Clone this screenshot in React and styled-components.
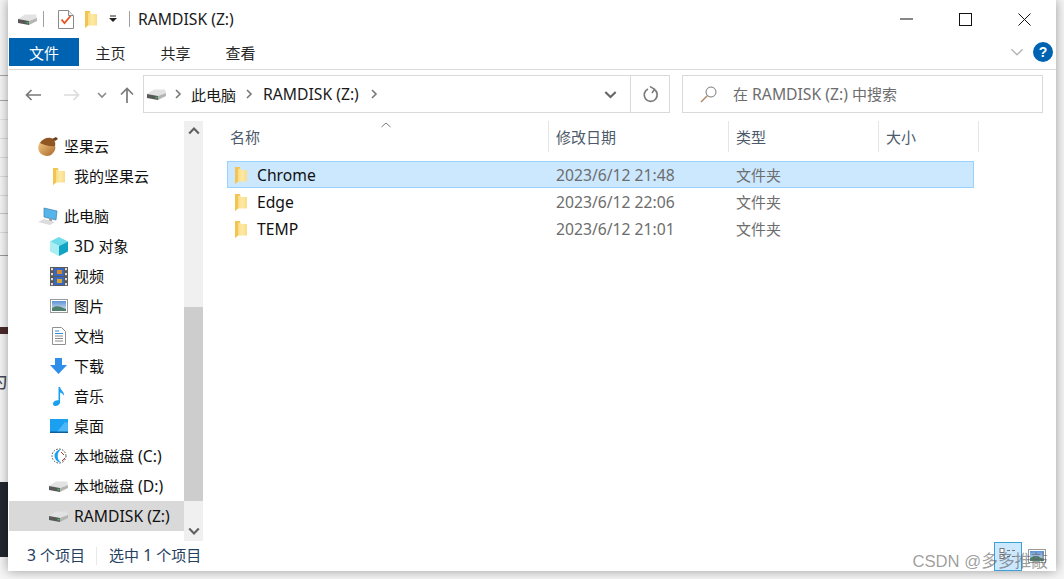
import React from 'react';
import styled, { createGlobalStyle } from 'styled-components';

const GlobalStyle = createGlobalStyle`
    html, body { margin: 0; padding: 0; background: #f4f4f4; }
    body { font-family: "Noto Sans", "Noto Sans CJK SC", sans-serif; overflow: hidden; }
`;

const Page = styled.div`
    width: 1064px;
    height: 579px;
    display: flex;
    align-items: flex-start;
    position: relative;
    overflow: hidden;
    background: #f6f6f6;
`;

// bit of the browser page that shows behind the window
const Strip = styled.div`
    width: 8px;
    height: 579px;
    flex-shrink: 0;
    display: flex;
    flex-direction: column;
    overflow: hidden;
`;

const StripMark = styled.div`
    flex-shrink: 0;
    height: ${p => p.$h}px;
    margin-top: ${p => p.$gap}px;
    background: ${p => p.$color};
`;

const StripGlyph = styled.div`
    flex-shrink: 0;
    height: 22px;
    margin-top: 36px;
    margin-left: -11px;
    width: 20px;
    font-size: 19px;
    line-height: 22px;
    color: #444b58;
`;

const Window = styled.div`
    width: 1048px;
    height: 571px;
    flex-shrink: 0;
    display: flex;
    flex-direction: column;
    background: #fff;
    box-shadow: 0 0 11px rgba(0, 0, 0, 0.38);
    position: relative;
    z-index: 1;
    padding-left: 1px;
    box-sizing: border-box;
    font-size: 15px;
`;

// Segoe UI runs wider than Noto Sans, so latin runs get a slightly larger size
const LatinRun = styled.span`
    font-size: 15.7px;
`;

const TitleBar = styled.div`
    height: 38px;
    display: flex;
    align-items: center;
    flex-shrink: 0;
`;

const QuickSlot = styled.div`
    display: flex;
    align-items: center;
    margin-left: ${p => p.$left}px;
`;

const TitleDivider = styled.div`
    width: 1px;
    height: 16px;
    background: #a0a0a0;
    margin-left: ${p => p.$left}px;
`;

const TitleText = styled.div`
    margin-left: 8px;
    color: #1a1a1a;
    flex: 1;
`;

const WinButton = styled.div`
    width: 59px;
    height: 38px;
    display: flex;
    align-items: center;
    justify-content: center;
`;

const WinButtons = styled.div`
    display: flex;
    margin-right: 2px;
`;

const RibbonTabs = styled.div`
    height: 31px;
    display: flex;
    align-items: flex-start;
    border-bottom: 1px solid #d9d9d9;
    flex-shrink: 0;
`;

const Tab = styled.div`
    height: 28px;
    width: ${p => (p.$file ? 70 : 65)}px;
    box-sizing: border-box;
    padding-right: ${p => (p.$file ? 0 : 2)}px;
    display: flex;
    align-items: center;
    justify-content: center;
    color: ${p => (p.$file ? '#fff' : '#262626')};
    background: ${p => (p.$file ? '#0063b1' : 'transparent')};
`;

const RibbonRight = styled.div`
    margin-left: auto;
    margin-right: 3px;
    height: 28px;
    display: flex;
    align-items: center;
    gap: 9px;
`;

const HelpBadge = styled.div`
    width: 20px;
    height: 20px;
    border-radius: 50%;
    background: #0063b1;
    color: #fff;
    font-size: 14px;
    font-weight: 700;
    font-family: "Liberation Sans", sans-serif;
    display: flex;
    align-items: center;
    justify-content: center;
`;

const AddressRow = styled.div`
    height: 49px;
    display: flex;
    align-items: flex-start;
    padding-top: 5px;
    box-sizing: border-box;
    flex-shrink: 0;
`;

const NavButtons = styled.div`
    width: 134px;
    height: 38px;
    flex-shrink: 0;
    display: flex;
    align-items: center;
    padding-top: 2px;
    box-sizing: border-box;
`;

const NavSlot = styled.div`
    display: flex;
    margin-left: ${p => p.$left}px;
`;

const AddressBox = styled.div`
    width: 527px;
    height: 38px;
    box-sizing: border-box;
    border: 1px solid #d9d9d9;
    display: flex;
    align-items: center;
    color: #1a1a1a;
`;

const Crumb = styled.span`
    margin-left: ${p => p.$left}px;
    display: flex;
    align-items: baseline;
`;

const AddressEnd = styled.div`
    margin-left: auto;
    display: flex;
    align-items: center;
    height: 100%;
`;

const AddressAction = styled.div`
    height: 100%;
    width: ${p => p.$w}px;
    display: flex;
    align-items: center;
    justify-content: center;
    box-sizing: border-box;
    border-left: ${p => (p.$line ? '1px solid #d9d9d9' : 'none')};
`;

const SearchBox = styled.div`
    margin-left: 12px;
    width: 361px;
    height: 38px;
    box-sizing: border-box;
    border: 1px solid #d9d9d9;
    display: flex;
    align-items: center;
    padding-left: 17px;
    gap: 16px;
    color: #6d6d6d;
`;

const Body = styled.div`
    flex: 1;
    min-height: 0;
    display: flex;
    padding-top: 2px;
`;

const Sidebar = styled.div`
    width: 175px;
    flex-shrink: 0;
    box-sizing: border-box;
    padding-top: 10px;
    display: flex;
    flex-direction: column;
`;

const NavRow = styled.div`
    height: 30px;
    flex-shrink: 0;
    box-sizing: border-box;
    display: flex;
    align-items: center;
    padding-left: ${p => (p.$top ? 29 : 40)}px;
    margin-bottom: ${p => (p.$groupEnd ? 10 : 0)}px;
    color: #111;
    background: ${p => (p.$active ? '#d9d9d9' : 'transparent')};
    white-space: nowrap;
`;

const NavIcon = styled.span`
    width: ${p => (p.$top ? 21 : 19)}px;
    margin-right: ${p => (p.$top ? 5 : 6)}px;
    flex-shrink: 0;
    display: flex;
    justify-content: center;
`;

const ScrollBar = styled.div`
    width: 19px;
    flex-shrink: 0;
    background: #f0f0f0;
    display: flex;
    flex-direction: column;
`;

const ScrollArrow = styled.div`
    height: 20px;
    flex-shrink: 0;
    margin-top: ${p => (p.$end ? 'auto' : 0)};
    display: flex;
    align-items: center;
    justify-content: center;
`;

const ScrollThumb = styled.div`
    height: 194px;
    margin-top: 166px;
    background: #cdcdcd;
`;

const FileArea = styled.div`
    flex: 1;
    min-width: 0;
    padding-left: 19px;
    display: flex;
    flex-direction: column;
`;

const HeaderRow = styled.div`
    height: 31px;
    display: flex;
    margin-bottom: 9px;
    position: relative;
    color: #4c5a6b;
`;

const HeaderCell = styled.div`
    width: ${p => p.$w}px;
    flex-shrink: 0;
    box-sizing: border-box;
    padding-left: ${p => p.$pad}px;
    border-right: 1px solid #e5e5e5;
    display: flex;
    align-items: center;
`;

const SortCaret = styled.svg`
    position: absolute;
    left: 159px;
    top: 1px;
`;

const FileRow = styled.div`
    width: 747px;
    height: 27px;
    margin-left: 5px;
    box-sizing: border-box;
    display: flex;
    align-items: center;
    color: #6d6d6d;
    border: 1px solid ${p => (p.$selected ? '#99d1ff' : 'transparent')};
    background: ${p => (p.$selected ? '#cce8ff' : 'transparent')};
`;

const FileName = styled.div`
    width: 328px;
    flex-shrink: 0;
    display: flex;
    align-items: center;
    gap: 10px;
    padding-left: 7px;
    box-sizing: border-box;
    color: #111;
`;

const FileDate = styled.div`
    width: 180px;
    flex-shrink: 0;
`;

const StatusBar = styled.div`
    height: 30px;
    flex-shrink: 0;
    display: flex;
    align-items: center;
    color: #24405f;
`;

const StatusText = styled.span`
    margin-left: ${p => p.$left}px;
    margin-bottom: 2px;
`;

const StatusDivider = styled.div`
    width: 1px;
    height: 18px;
    background: #e8e8e8;
    margin-left: 11px;
`;

const ViewButtons = styled.div`
    margin-left: auto;
    margin-right: 9px;
    display: flex;
    align-items: center;
    gap: 5px;
`;

const ViewButton = styled.div`
    width: ${p => (p.$on ? 28 : 20)}px;
    height: 29px;
    box-sizing: border-box;
    display: flex;
    align-items: center;
    justify-content: center;
    border: 1px solid ${p => (p.$on ? '#3f9fd8' : 'transparent')};
    background: ${p => (p.$on ? '#cce8ff' : 'transparent')};
`;

const Watermark = styled.div`
    position: absolute;
    right: 16px;
    bottom: 7px;
    z-index: 2;
    font-family: "Liberation Sans", "Noto Sans CJK SC", sans-serif;
    font-size: 16.7px;
    color: rgba(95, 95, 95, 0.62);
`;

// renders a label, giving the latin parts their own size
const Mixed = ({ text }) => (
    <span>
        {text.split(/([\u4e00-\u9fff]+)/).map((part, i) =>
            /[\u4e00-\u9fff]/.test(part) ? part : <LatinRun key={i}>{part}</LatinRun>
        )}
    </span>
);

const Chevron = ({ size = 10, color = '#666', dir = 'right', width = 1.6 }) => {
    const d = { right: 'M3 1l4 4-4 4', down: 'M1 3l4 4 4-4', up: 'M1 7l4-4 4 4' }[dir];
    return (
        <svg width={size} height={size} viewBox="0 0 10 10" fill="none">
            <path d={d} stroke={color} strokeWidth={width} />
        </svg>
    );
};

const FolderIcon = () => (
    <svg width="12" height="18" viewBox="0 0 12 18">
        <defs>
            <linearGradient id="fold" x1="0" y1="0" x2="1" y2="0">
                <stop offset="0" stopColor="#f7d26c" />
                <stop offset="0.6" stopColor="#fde9a6" />
                <stop offset="1" stopColor="#f9dc88" />
            </linearGradient>
        </defs>
        <path d="M0 1h5l1 3h6v11.500H3L0 18z" fill="url(#fold)" />
        <path d="M0 1h5v1.500l-2 .5v12.500L0 18z" fill="#f2c552" />
    </svg>
);

const DriveIcon = () => (
    <svg width="19" height="11" viewBox="0 0 19 11">
        <path d="M0 5l7-4.500h11l1 3.500-8 3z" fill="#e2e2e2" />
        <path d="M11 7l8-3v3l-8 4z" fill="#b4b4b4" />
        <path d="M0 5l11 2v4L0 9z" fill="#585858" />
        <rect x="8.500" y="7.800" width="2" height="1.500" fill="#3fbf5f" />
    </svg>
);

const TaskIcon = () => (
    <svg width="16" height="19" viewBox="0 0 16 19">
        <path d="M.5.5h10l5 5v13H.5z" fill="#fff" stroke="#8a8a8a" />
        <path d="M10.500.5v5h5" fill="#eee" stroke="#8a8a8a" />
        <path d="M3.500 9.500l3 3.500 6-7" fill="none" stroke="#e8531f" strokeWidth="1.800" />
    </svg>
);

const AcornIcon = () => (
    <svg width="21" height="21" viewBox="0 0 21 21">
        <defs>
            <linearGradient id="nut" x1="0" y1="0" x2="1" y2="1">
                <stop offset="0" stopColor="#f1c982" />
                <stop offset="1" stopColor="#a9662a" />
            </linearGradient>
        </defs>
        <path d="M2 6c-3 5-2 11 3 13 4 2 8 1 10-2 2-2 3-5 2-7z" fill="url(#nut)" />
        <path d="M2 7c2-4 7-6 11-5 3 1 5 4 4 8-4 1-11-1-15-3z" fill="#8f5522" />
        <path d="M14 3l4-2 2 2-3 2z" fill="#6d3c17" />
    </svg>
);

const PcIcon = () => (
    <svg width="21" height="18" viewBox="0 0 21 18">
        <path d="M6 1l13 3-1 9-12-3z" fill="#54b5ea" stroke="#3c7fb0" strokeWidth=".7" />
        <path d="M11 11l3 1v3l-3-1z" fill="#9c9c9c" />
        <path d="M0 15l6-3 11 3-5 3z" fill="#dcdcdc" />
    </svg>
);

const CubeIcon = () => (
    <svg width="18" height="19" viewBox="0 0 18 19">
        <path d="M9 0l9 4.500L9 9 0 4.500z" fill="#6fdcea" />
        <path d="M0 4.500L9 9v10l-9-4.500z" fill="#a8eef2" />
        <path d="M18 4.500L9 9v10l9-4.500z" fill="#12a4c4" />
    </svg>
);

const FilmIcon = () => (
    <svg width="18" height="19" viewBox="0 0 18 19">
        <rect width="18" height="19" fill="#5a5a5a" />
        {[1, 6, 11, 16].map(y => (
            <React.Fragment key={y}>
                <rect x="1" y={y} width="2" height="2.200" fill="#ddd" />
                <rect x="15" y={y} width="2" height="2.200" fill="#ddd" />
            </React.Fragment>
        ))}
        <rect x="4" y="1" width="10" height="8" fill="#3a68c0" />
        <rect x="4" y="10" width="10" height="8" fill="#3a68c0" />
        <rect x="7" y="3" width="5" height="4" fill="#d58a2a" />
        <rect x="7" y="12" width="5" height="4" fill="#d5a72a" />
    </svg>
);

const PictureIcon = () => (
    <svg width="18" height="14" viewBox="0 0 18 14">
        <defs>
            <linearGradient id="sky" x1="0" y1="0" x2="0" y2="1">
                <stop offset="0" stopColor="#5d93d6" />
                <stop offset="1" stopColor="#dfe9ee" />
            </linearGradient>
        </defs>
        <rect x=".5" y=".5" width="17" height="13" fill="#fff" stroke="#9a9a9a" />
        <rect x="2" y="2" width="14" height="10" fill="url(#sky)" />
        <path d="M2 9c4-3 8-2 14 1v2H2z" fill="#4f7f6f" />
    </svg>
);

const DocIcon = () => (
    <svg width="14" height="18" viewBox="0 0 14 18">
        <path d="M.5.5h9l4 4v13H.5z" fill="#fff" stroke="#909090" />
        <path d="M3 4h4M3 6.500h8" stroke="#2f8fe0" />
        <path d="M3 9h8M3 11.500h8M3 14h8" stroke="#8a8a8a" />
    </svg>
);

const DownloadIcon = () => (
    <svg width="17" height="16" viewBox="0 0 17 16">
        <path d="M5 0h7v7h5l-8.500 9L0 7h5z" fill="#2f8fe8" />
    </svg>
);

const MusicIcon = () => (
    <svg width="12" height="19" viewBox="0 0 12 19">
        <path d="M5.500 0h1.600c0 3 4.500 4.500 4 9-.6-2-2.600-3-4-3.500V15c0 2.500-2.500 4-5 4C.5 19 0 17.500 0 16.500 0 14.500 2.500 13 5.500 13.300z" fill="#1b9ff0" />
    </svg>
);

const DesktopIcon = () => (
    <svg width="18" height="14" viewBox="0 0 18 14">
        <rect width="18" height="13" fill="#1b9ff0" />
        <path d="M7 13l8-10 3 1v9z" fill="#4db8f7" />
        <rect y="12.500" width="18" height="1.500" fill="#0d5f9c" />
    </svg>
);

const SystemDiskIcon = () => (
    <svg width="16" height="16" viewBox="0 0 16 16">
        <circle cx="8" cy="8" r="7" fill="#fff" stroke="#444" strokeDasharray="1.500 1.500" />
        <path d="M10 1.500A6.500 6.500 0 1 0 10 14.500 A8 8 0 0 1 10 1.500z" fill="#1b9ff0" />
        <path d="M10 4l3 3M11 13l3-3" stroke="#c03040" />
    </svg>
);

const sidebarRows = [
    { label: '坚果云', Icon: AcornIcon, top: true },
    { label: '我的坚果云', Icon: FolderIcon, groupEnd: true },
    { label: '此电脑', Icon: PcIcon, top: true },
    { label: '3D 对象', Icon: CubeIcon },
    { label: '视频', Icon: FilmIcon },
    { label: '图片', Icon: PictureIcon },
    { label: '文档', Icon: DocIcon },
    { label: '下载', Icon: DownloadIcon },
    { label: '音乐', Icon: MusicIcon },
    { label: '桌面', Icon: DesktopIcon },
    { label: '本地磁盘 (C:)', Icon: SystemDiskIcon },
    { label: '本地磁盘 (D:)', Icon: DriveIcon },
    { label: 'RAMDISK (Z:)', Icon: DriveIcon, active: true },
];

const files = [
    { name: 'Chrome', date: '2023/6/12 21:48', selected: true },
    { name: 'Edge', date: '2023/6/12 22:06' },
    { name: 'TEMP', date: '2023/6/12 21:01' },
];

const stripMarks = [
    [1, 75, '#a8a8a8'], [1, 24, '#a8a8a8'], [1, 18, '#e2e2e2'], [1, 18, '#dcdcdc'], [1, 18, '#dcdcdc'],
    [1, 18, '#dcdcdc'], [1, 18, '#dcdcdc'], [1, 17, '#c8c8c8'], [1, 18, '#dcdcdc'], [1, 22, '#9a9a9a'],
    [7, 71, '#4b2a2c'],
];

export default function App() {
    return (
        <Page>
            <GlobalStyle />
            <Strip>
                {stripMarks.map(([h, gap, color], i) => (
                    <StripMark key={i} $h={h} $gap={gap} $color={color} />
                ))}
                <StripGlyph>为</StripGlyph>
                <StripMark $h={75} $gap={90} $color="#23272f" />
            </Strip>
            <Window>
                <TitleBar>
                    <QuickSlot $left={9}><DriveIcon /></QuickSlot>
                    <TitleDivider $left={6} />
                    <QuickSlot $left={14}><TaskIcon /></QuickSlot>
                    <QuickSlot $left={11}><FolderIcon /></QuickSlot>
                    <QuickSlot $left={12}>
                        <svg width="8" height="8" viewBox="0 0 8 8">
                            <path d="M1 1h6" stroke="#222" />
                            <path d="M0 3h8L4 7z" fill="#222" />
                        </svg>
                    </QuickSlot>
                    <TitleDivider $left={12} />
                    <TitleText><Mixed text="RAMDISK (Z:)" /></TitleText>
                    <WinButtons>
                        <WinButton>
                            <svg width="13" height="2" viewBox="0 0 13 2"><path d="M0 1h13" stroke="#111" /></svg>
                        </WinButton>
                        <WinButton>
                            <svg width="13" height="13" viewBox="0 0 13 13"><rect x=".5" y=".5" width="12" height="12" fill="none" stroke="#111" /></svg>
                        </WinButton>
                        <WinButton>
                            <svg width="13" height="13" viewBox="0 0 13 13"><path d="M.5.5l12 12M12.500.5l-12 12" stroke="#111" /></svg>
                        </WinButton>
                    </WinButtons>
                </TitleBar>
                <RibbonTabs>
                    <Tab $file>文件</Tab>
                    <Tab>主页</Tab>
                    <Tab>共享</Tab>
                    <Tab>查看</Tab>
                    <RibbonRight>
                        <Chevron size={14} color="#b5b5b5" dir="down" width={1} />
                        <HelpBadge>?</HelpBadge>
                    </RibbonRight>
                </RibbonTabs>
                <AddressRow>
                    <NavButtons>
                        <NavSlot $left={16}>
                            <svg width="16" height="12" viewBox="0 0 16 12"><path d="M16 6H1.500M6.500 1l-5 5 5 5" fill="none" stroke="#7a7a7a" strokeWidth="1.700" /></svg>
                        </NavSlot>
                        <NavSlot $left={23}>
                            <svg width="16" height="12" viewBox="0 0 16 12"><path d="M0 6h14.500M9.500 1l5 5-5 5" fill="none" stroke="#dcdcdc" strokeWidth="1.700" /></svg>
                        </NavSlot>
                        <NavSlot $left={17}><Chevron size={10} color="#8a8a8a" dir="down" /></NavSlot>
                        <NavSlot $left={13}>
                            <svg width="14" height="16" viewBox="0 0 14 16"><path d="M7 16V1.500M1 7.500l6-6 6 6" fill="none" stroke="#7a7a7a" strokeWidth="1.700" /></svg>
                        </NavSlot>
                    </NavButtons>
                    <AddressBox>
                        <Crumb $left={3}><DriveIcon /></Crumb>
                        <Crumb $left={7}><Chevron size={10} color="#777" /></Crumb>
                        <Crumb $left={8}>此电脑</Crumb>
                        <Crumb $left={8}><Chevron size={10} color="#777" /></Crumb>
                        <Crumb $left={9}><Mixed text="RAMDISK (Z:)" /></Crumb>
                        <Crumb $left={10}><Chevron size={10} color="#777" /></Crumb>
                        <AddressEnd>
                            <AddressAction $w={40}><Chevron size={13} color="#666" dir="down" /></AddressAction>
                            <AddressAction $w={39} $line>
                                <svg width="17" height="17" viewBox="0 0 17 17">
                                    <path d="M6 3a6.500 6.500 0 1 0 6 .3" fill="none" stroke="#7a7a7a" strokeWidth="1.700" />
                                    <path d="M8 0.500L12.500 3.200 10 7" fill="none" stroke="#7a7a7a" strokeWidth="1.500" />
                                </svg>
                            </AddressAction>
                        </AddressEnd>
                    </AddressBox>
                    <SearchBox>
                        <svg width="17" height="17" viewBox="0 0 17 17">
                            <circle cx="11" cy="6" r="5" fill="none" stroke="#7a7a7a" />
                            <path d="M7.500 9.500L1 16" stroke="#b08a60" strokeWidth="1.400" />
                        </svg>
                        <Mixed text="在 RAMDISK (Z:) 中搜索" />
                    </SearchBox>
                </AddressRow>
                <Body>
                    <Sidebar>
                        {sidebarRows.map(({ label, Icon, top, groupEnd, active }) => (
                            <NavRow key={label} $top={top} $groupEnd={groupEnd} $active={active}>
                                <NavIcon $top={top}><Icon /></NavIcon>
                                <Mixed text={label} />
                            </NavRow>
                        ))}
                    </Sidebar>
                    <ScrollBar>
                        <ScrollArrow><Chevron size={12} color="#606060" dir="up" width={1.8} /></ScrollArrow>
                        <ScrollThumb />
                        <ScrollArrow $end><Chevron size={12} color="#606060" dir="down" width={1.8} /></ScrollArrow>
                    </ScrollBar>
                    <FileArea>
                        <HeaderRow>
                            <SortCaret width="10" height="6" viewBox="0 0 10 6" fill="none"><path d="M.5 5l4.500-4 4.500 4" stroke="#7a7a7a" /></SortCaret>
                            <HeaderCell $w={327} $pad={8}>名称</HeaderCell>
                            <HeaderCell $w={180} $pad={7}>修改日期</HeaderCell>
                            <HeaderCell $w={150} $pad={7}>类型</HeaderCell>
                            <HeaderCell $w={100} $pad={7}>大小</HeaderCell>
                        </HeaderRow>
                        {files.map(f => (
                            <FileRow key={f.name} $selected={f.selected}>
                                <FileName><FolderIcon /><Mixed text={f.name} /></FileName>
                                <FileDate><Mixed text={f.date} /></FileDate>
                                文件夹
                            </FileRow>
                        ))}
                    </FileArea>
                </Body>
                <StatusBar>
                    <StatusText $left={18}><Mixed text="3 个项目" /></StatusText>
                    <StatusDivider />
                    <StatusText $left={12}><Mixed text="选中 1 个项目" /></StatusText>
                    <ViewButtons>
                        <ViewButton $on>
                            <svg width="20" height="16" viewBox="0 0 20 16">
                                <rect x="2" y=".5" width="4" height="4" fill="#fff" stroke="#777" />
                                <rect x="2" y="6.500" width="4" height="4" fill="#fff" stroke="#777" />
                                <path d="M9 2.500h3M14 2.500h3M9 8.500h3M14 8.500h3" stroke="#777" />
                            </svg>
                        </ViewButton>
                        <ViewButton>
                            <PictureIcon />
                        </ViewButton>
                    </ViewButtons>
                </StatusBar>
            </Window>
            <Watermark>CSDN @多多推敲</Watermark>
        </Page>
    );
}
